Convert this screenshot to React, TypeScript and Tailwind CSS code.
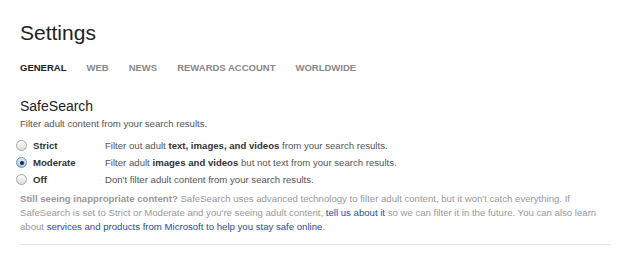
import React from 'react';

const tabs = ['General', 'Web', 'News', 'Rewards Account', 'Worldwide'];

const Radio = ({ checked }: { checked?: boolean }) => (
  <span
    className={`w-[11px] h-[11px] rounded-full border flex items-center justify-center shrink-0 ${checked
      ? 'border-[#6e8fb8] bg-gradient-to-b from-[#dfeaf7] to-[#a9c3e3]'
      : 'border-[#a8a8a8] bg-gradient-to-b from-[#ffffff] to-[#dcdcdc]'
      }`}
  >
    {checked && <span className="w-[4px] h-[4px] rounded-full bg-[#1c2a3a]"></span>}
  </span>
);

export default function App() {
  const options = [
    {
      label: 'Strict',
      desc: (
        <>
          Filter out adult <b className="font-bold text-[#333]">text, images, and videos</b> from your search results.
        </>
      ),
    },
    {
      label: 'Moderate',
      checked: true,
      desc: (
        <>
          Filter adult <b className="font-bold text-[#333]">images and videos</b> but not text from your search results.
        </>
      ),
    },
    { label: 'Off', desc: <>Don't filter adult content from your search results.</> },
  ];

  return (
    <div className="w-[620px] h-[257px] bg-white overflow-hidden px-[20px] font-['Liberation_Sans',Arial,sans-serif]">
      <h1 className="pt-[22px] text-[21px] leading-none text-[#222]">Settings</h1>

      <nav className="mt-[19px] flex gap-[20px] text-[9.5px] leading-[12px] font-bold uppercase">
        {tabs.map((t, i) => (
          <span key={t} className={i === 0 ? 'text-[#222]' : 'text-[#888]'}>{t}</span>
        ))}
      </nav>

      <h2 className="mt-[25px] text-[14px] leading-none text-[#222]">SafeSearch</h2>
      <p className="mt-[5px] text-[9.6px] leading-[12px] text-[#555]">Filter adult content from your search results.</p>

      <div className="mt-[7px] flex flex-col">
        {options.map((o) => (
          <div key={o.label} className="flex items-center h-[17px] text-[9.6px] leading-[17px]">
            <div className="w-[89px] flex items-center gap-[6px] -ml-[4px]">
              <Radio checked={o.checked} />
              <span className="font-bold text-[#333]">{o.label}</span>
            </div>
            <span className="text-[#555]">{o.desc}</span>
          </div>
        ))}
      </div>

      <p className="mt-[4px] w-[590px] text-[9.6px] leading-[14px] text-[#999]">
        <b className="font-bold">Still seeing inappropriate content?</b> SafeSearch uses advanced technology to filter adult
        content, but it won't catch everything. If SafeSearch is set to Strict or Moderate and you're seeing adult content,{' '}
        <a className="text-[#2a45c2]">tell us about it</a> so we can filter it in the future. You can also learn about{' '}
        <a className="text-[#2a45c2]">services and products from Microsoft to help you stay safe online</a>.
      </p>

      <div className="mt-[10px] w-[590px] h-px bg-[#e6e6e6]"></div>
    </div>
  );
}
